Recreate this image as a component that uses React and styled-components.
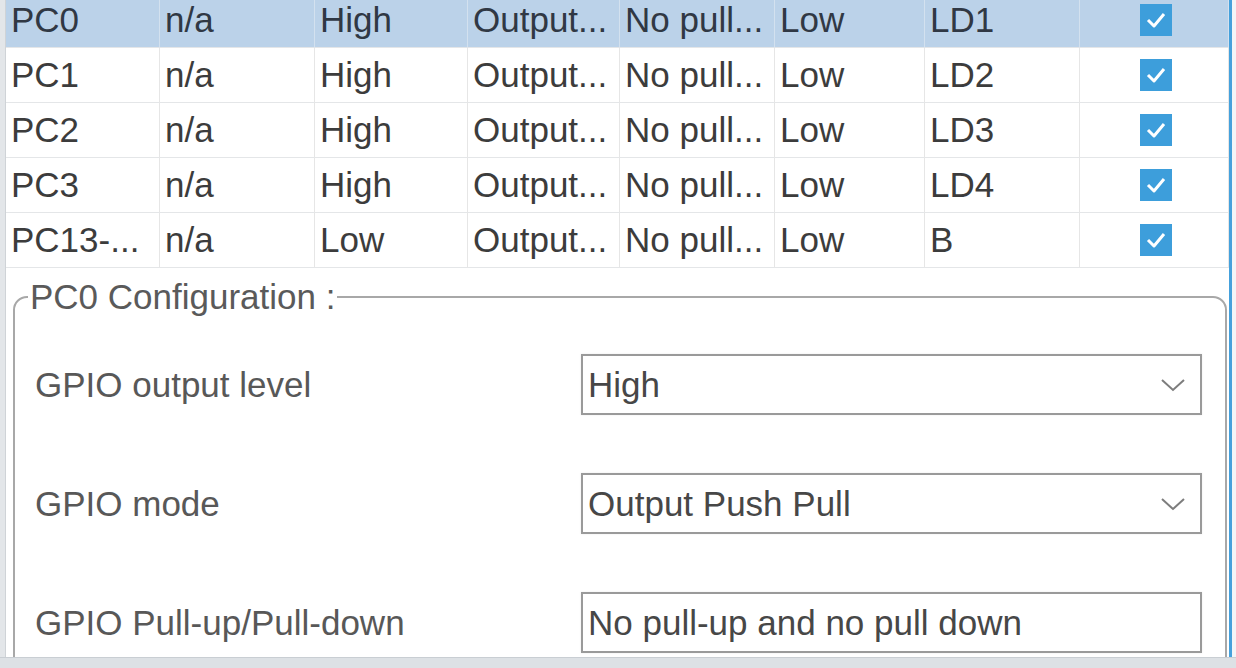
import React from 'react';
import styled, { createGlobalStyle } from 'styled-components';

const GlobalStyle = createGlobalStyle`
  html, body {
    margin: 0;
    padding: 0;
    background: #ffffff;
    font-family: 'Liberation Sans', Arial, sans-serif;
  }
  #root {
    height: 668px;
  }
`;

const Screen = styled.div`
  width: 1236px;
  height: 668px;
  display: flex;
  flex-direction: column;
  overflow: hidden;
  background: #fff;
`;

const Body = styled.div`
  flex: 1;
  min-height: 0;
  display: flex;
`;

const LeftStrip = styled.div`
  width: 5px;
  background: #e3e6e9;
  border-right: 1px solid #cfd3d7;
`;

const Main = styled.div`
  flex: 1;
  min-width: 0;
  display: flex;
  flex-direction: column;
  overflow: hidden;
`;

const RightEdge = styled.div`
  width: 4px;
  border-left: 3px solid #45a1dc;
  background: #f3f5f7;
`;

const BottomBar = styled.div`
  height: 10px;
  background: #dde1e5;
  border-top: 1px solid #c9ced3;
`;

const Table = styled.div`
  margin-top: -7px;
  display: grid;
  grid-template-columns: 154px 155px 153px 152px 155px 150px 155px 1fr;
`;

const Cell = styled.div`
  height: 55px;
  border-bottom: 1px solid #e4e6e8;
  border-right: 1px solid ${p => (p.selected ? '#d3e1ef' : '#e6e6e6')};
  background: ${p => (p.selected ? '#bbd2e9' : '#ffffff')};
  color: ${p => (p.selected ? '#303844' : '#3c3c3c')};
  font-size: 35px;
  padding-left: 5px;
  white-space: nowrap;
  overflow: hidden;
  display: flex;
  align-items: center;
  justify-content: ${p => (p.center ? 'center' : 'flex-start')};
  box-sizing: border-box;
`;

const CheckBox = styled.div`
  width: 32px;
  height: 32px;
  background: #3d9edb;
  display: flex;
  align-items: center;
  justify-content: center;
  margin-left: -2px;
`;

const Fieldset = styled.fieldset`
  margin: 9px 2px 0 7px;
  padding: 37px 23px 60px 22px;
  border: 2px solid #a8a8a8;
  border-radius: 14px;
  flex-shrink: 0;
`;

const Legend = styled.legend`
  font-size: 35px;
  line-height: 40px;
  color: #5a5a5a;
  padding: 0 2px;
  margin-left: -9px;
`;

const FieldList = styled.div`
  display: flex;
  flex-direction: column;
  gap: 58px;
`;

const FieldRow = styled.div`
  display: grid;
  grid-template-columns: 1fr 621px;
  align-items: center;
`;

const Label = styled.div`
  font-size: 35px;
  color: #585858;
  margin-left: -2px;
`;

const Control = styled.div`
  height: 61px;
  box-sizing: border-box;
  border: 2px solid #9a9a9a;
  box-shadow: 0 0 2px rgba(0, 0, 0, 0.08);
  display: flex;
  align-items: center;
  justify-content: space-between;
  padding: 0 14px 0 5px;
  font-size: 35px;
  color: #474747;
  background: #fff;
`;

const Chevron = () => (
  <svg width="26" height="16" viewBox="0 0 26 16">
    <polyline points="2,3 13,13 24,3" fill="none" stroke="#7d7d7d" strokeWidth="2" />
  </svg>
);

const Check = () => (
  <svg width="22" height="18" viewBox="0 0 22 18">
    <polyline points="3,9 9,15 19,3" fill="none" stroke="#ffffff" strokeWidth="3" strokeLinejoin="round" />
  </svg>
);

const rows = [
  ['PC0', 'n/a', 'High', 'Output...', 'No pull...', 'Low', 'LD1'],
  ['PC1', 'n/a', 'High', 'Output...', 'No pull...', 'Low', 'LD2'],
  ['PC2', 'n/a', 'High', 'Output...', 'No pull...', 'Low', 'LD3'],
  ['PC3', 'n/a', 'High', 'Output...', 'No pull...', 'Low', 'LD4'],
  ['PC13-...', 'n/a', 'Low', 'Output...', 'No pull...', 'Low', 'B'],
];

const fields = [
  { label: 'GPIO output level', value: 'High', select: true },
  { label: 'GPIO mode', value: 'Output Push Pull', select: true },
  { label: 'GPIO Pull-up/Pull-down', value: 'No pull-up and no pull down', select: false },
];

export default function App() {
  return (
    <>
      <GlobalStyle />
      <Screen>
        <Body>
          <LeftStrip />
          <Main>
            <Table>
              {rows.map((row, i) => (
                <React.Fragment key={i}>
                  {row.map((v, j) => (
                    <Cell key={j} selected={i === 0}>{v}</Cell>
                  ))}
                  <Cell selected={i === 0} center>
                    <CheckBox><Check /></CheckBox>
                  </Cell>
                </React.Fragment>
              ))}
            </Table>
            <Fieldset>
              <Legend>PC0 Configuration :</Legend>
              <FieldList>
                {fields.map(f => (
                  <FieldRow key={f.label}>
                    <Label>{f.label}</Label>
                    <Control>
                      <span>{f.value}</span>
                      {f.select && <Chevron />}
                    </Control>
                  </FieldRow>
                ))}
              </FieldList>
            </Fieldset>
          </Main>
          <RightEdge />
        </Body>
        <BottomBar />
      </Screen>
    </>
  );
}
